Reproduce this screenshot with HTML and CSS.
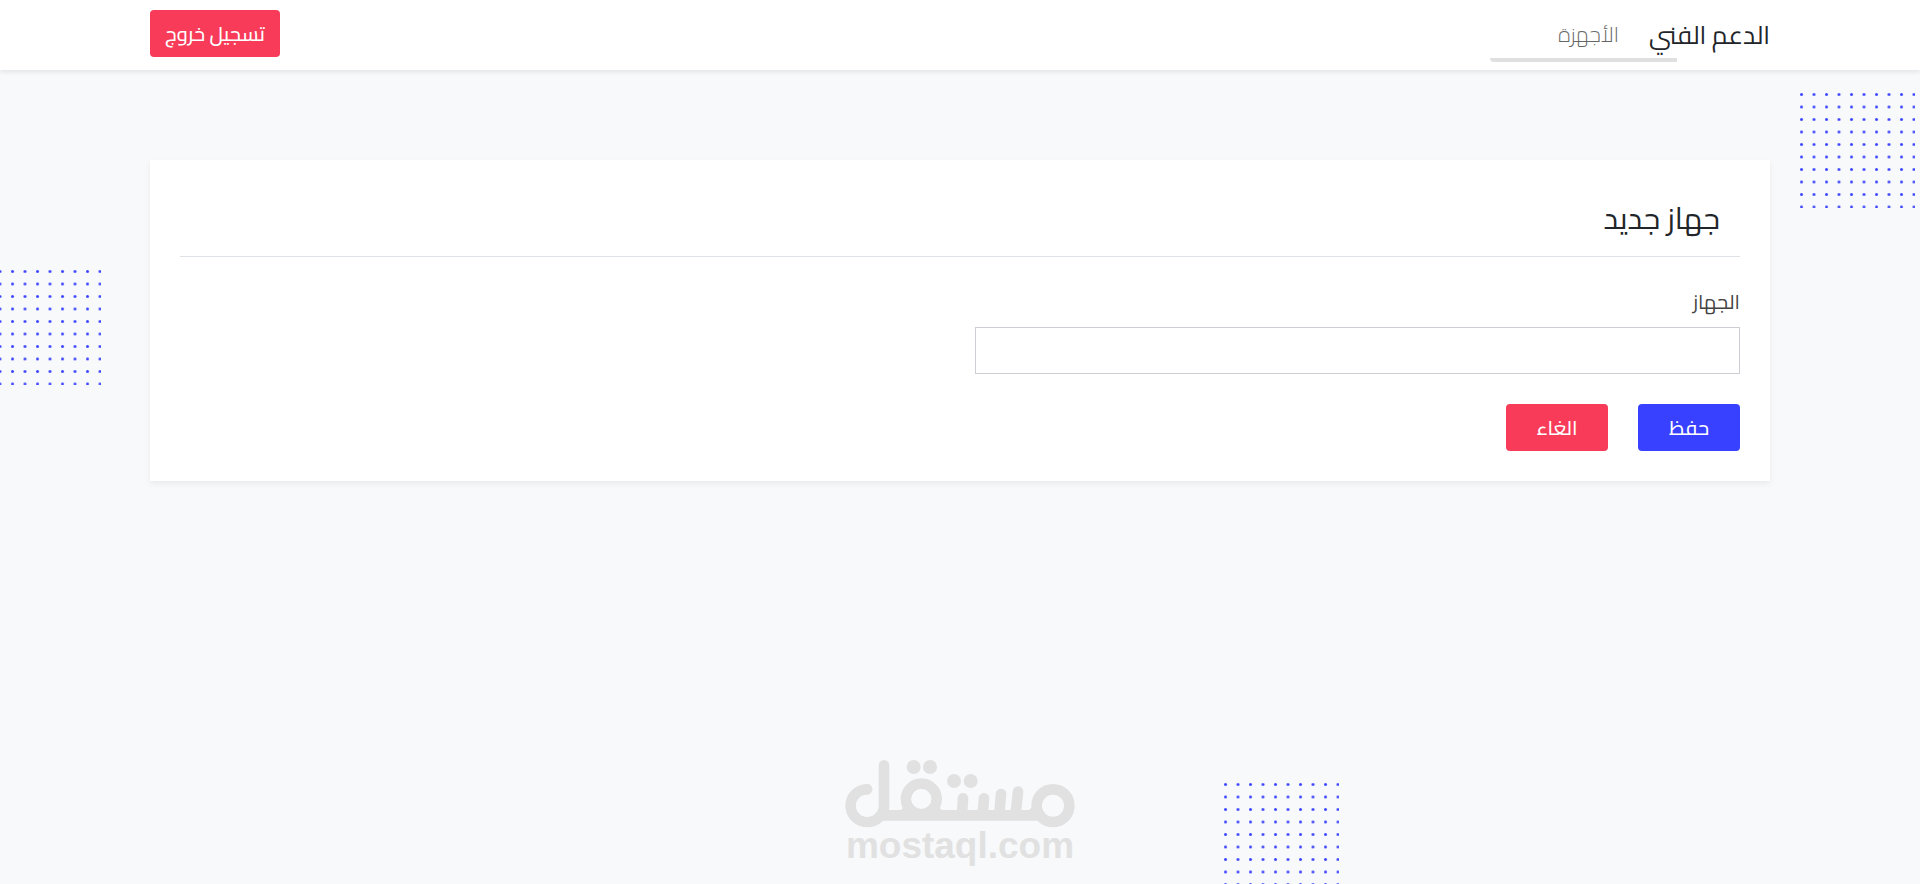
FILE: index.html
```html
<!DOCTYPE html>
<html lang="ar" dir="rtl">
<head>
    <meta charset="UTF-8">
    <meta name="viewport" content="width=device-width, initial-scale=1">
    <title>الدعم الفني</title>
    <link rel="stylesheet" href="styles.css">
</head>
<body>
<!-- background dots -->
<svg class="dots dots-right" viewBox="0 0 115 115" aria-hidden="true">
    <defs>
        <pattern id="dot" width="12.5" height="12.5" patternUnits="userSpaceOnUse">
            <circle cx="1.5" cy="1.5" r="1.5"/>
        </pattern>
    </defs>
    <rect width="115" height="115" fill="url(#dot)"/>
</svg>
<svg class="dots dots-left" viewBox="0 0 115 115" aria-hidden="true">
    <rect width="115" height="115" fill="url(#dot)"/>
</svg>
<svg class="dots dots-bottom" viewBox="0 0 115 115" aria-hidden="true">
    <rect width="115" height="115" fill="url(#dot)"/>
</svg>

<header class="header">
    <div class="container nav">
        <a class="brand" href="#">الدعم الفني</a>
        <nav class="menu">
            <a class="menu-link" href="#">الأجهزة</a>
        </nav>
        <button class="btn btn-logout" type="button">تسجيل خروج</button>
    </div>
</header>

<main class="container">
    <form class="card">
        <h1 class="card-title">جهاز جديد</h1>
        <div class="fields">
            <div class="field">
                <label for="device">الجهاز</label>
                <input type="text" id="device" name="device">
            </div>
        </div>
        <div class="actions">
            <button class="btn btn-save" type="submit">حفظ</button>
            <button class="btn btn-cancel" type="button">الغاء</button>
        </div>
    </form>
</main>

<div class="watermark">
    <svg viewBox="75 60 690 204" aria-hidden="true">
        <g fill="none" stroke="#e1e1e1" stroke-width="32" stroke-linecap="round">
            <circle cx="699" cy="197" r="49"/>
            <path d="M660 226H192"/>
            <circle cx="304" cy="177" r="46"/>
            <path d="M192 76V197A50 49 0 1 1 141 148"/>
            <path d="M429 175L426 222M492 175L488 222M543 162L538 222M594 155L587 222"/>
        </g>
        <g fill="#e1e1e1">
            <path d="M236 212Q254 208 254 190L354 190Q354 208 372 212Z M620 212Q638 208 640 190L660 226Z"/>
            <circle cx="281" cy="81" r="21"/>
            <circle cx="330" cy="81" r="21"/>
            <circle cx="402" cy="123" r="21"/>
            <circle cx="452" cy="123" r="21"/>
        </g>
        <circle cx="304" cy="177" r="30" fill="#f8f9fb"/>
        <circle cx="141" cy="197" r="33" fill="#f8f9fb"/>
        <circle cx="141" cy="148" r="16" fill="#e1e1e1"/>
    </svg>
    <span>mostaql.com</span>
</div>
</body>
</html>
```
FILE: styles.css
```css
* {
    margin: 0;
    padding: 0;
    box-sizing: border-box;
}

body {
    position: relative;
    min-height: 100vh;
    overflow: hidden;
    background-color: #f8f9fb;
    color: #212529;
    font-family: Cairo, "DejaVu Sans Condensed", "DejaVu Sans", sans-serif;
    font-size: 20px;
}

a {
    color: inherit;
    text-decoration: none;
}

.container {
    width: 100%;
    max-width: 1650px;
    margin: 0 auto;
    padding: 0 15px;
}

/* header */
.header {
    position: relative;
    padding-bottom: 2px;
    background-color: #fff;
    box-shadow: 0 2px 5px rgba(0, 0, 0, .09);
}

.nav {
    display: flex;
    align-items: center;
    height: 68px;
}

.brand {
    position: relative;
    z-index: 1;
    font-size: 25px;
    white-space: nowrap;
}

.menu {
    position: relative;
    padding: 0 30px;
}

.menu::after {
    content: "";
    position: absolute;
    right: -28px;
    bottom: -8px;
    width: 187px;
    height: 4px;
    background-color: #e0e0e0;
    border-bottom-left-radius: 4px;
}

.menu-link {
    color: #666;
    font-size: 21px;
    font-weight: 300;
}

/* buttons */
.btn {
    min-width: 102px;
    height: 47px;
    border: 0;
    border-radius: 4px;
    color: #fff;
    font-family: inherit;
    font-size: 20px;
    font-weight: 500;
    cursor: pointer;
}

.btn-logout {
    align-self: flex-start;
    min-width: 130px;
    margin-top: 10px;
    margin-right: auto;
    background-color: #f73b59;
}

.btn-save {
    background-color: #3741ff;
}

.btn-cancel {
    background-color: #f73b59;
}

/* form */
.card {
    position: relative;
    margin-top: 90px;
    padding: 30px;
    background-color: #fff;
    box-shadow: 0 3px 6px rgba(0, 0, 0, .06);
}

.card-title {
    padding: 0 20px 10px;
    border-bottom: 1px solid #dee2e6;
    font-size: 30px;
    font-weight: 400;
    line-height: 56px;
}

.fields {
    display: grid;
    grid-template-columns: 1fr 1fr;
    gap: 30px;
    padding: 30px 0;
}

.field label {
    display: block;
    margin-bottom: 10px;
    color: #444;
    line-height: 30px;
}

.field input {
    display: block;
    width: 100%;
    height: 47px;
    padding: 0 15px;
    border: 1px solid #cfced5;
    background-color: #fff;
    font: inherit;
}

.actions {
    display: flex;
    gap: 30px;
}

/* decoration */
.dots {
    position: absolute;
    width: 115px;
    height: 115px;
    fill: #3741ff;
}

.dots-right {
    top: 93px;
    right: 5px;
}

.dots-left {
    top: 270px;
    left: -14px;
}

.dots-bottom {
    right: 581px;
    bottom: -14px;
}

.watermark {
    position: absolute;
    right: 0;
    bottom: 20px;
    left: 0;
    display: flex;
    flex-direction: column;
    align-items: center;
    color: #e1e1e1;
    font-family: "Liberation Sans", Arial, sans-serif;
    font-size: 37px;
    font-weight: 700;
    line-height: 36px;
    pointer-events: none;
}

.watermark svg {
    width: 230px;
    height: 68px;
}
```
